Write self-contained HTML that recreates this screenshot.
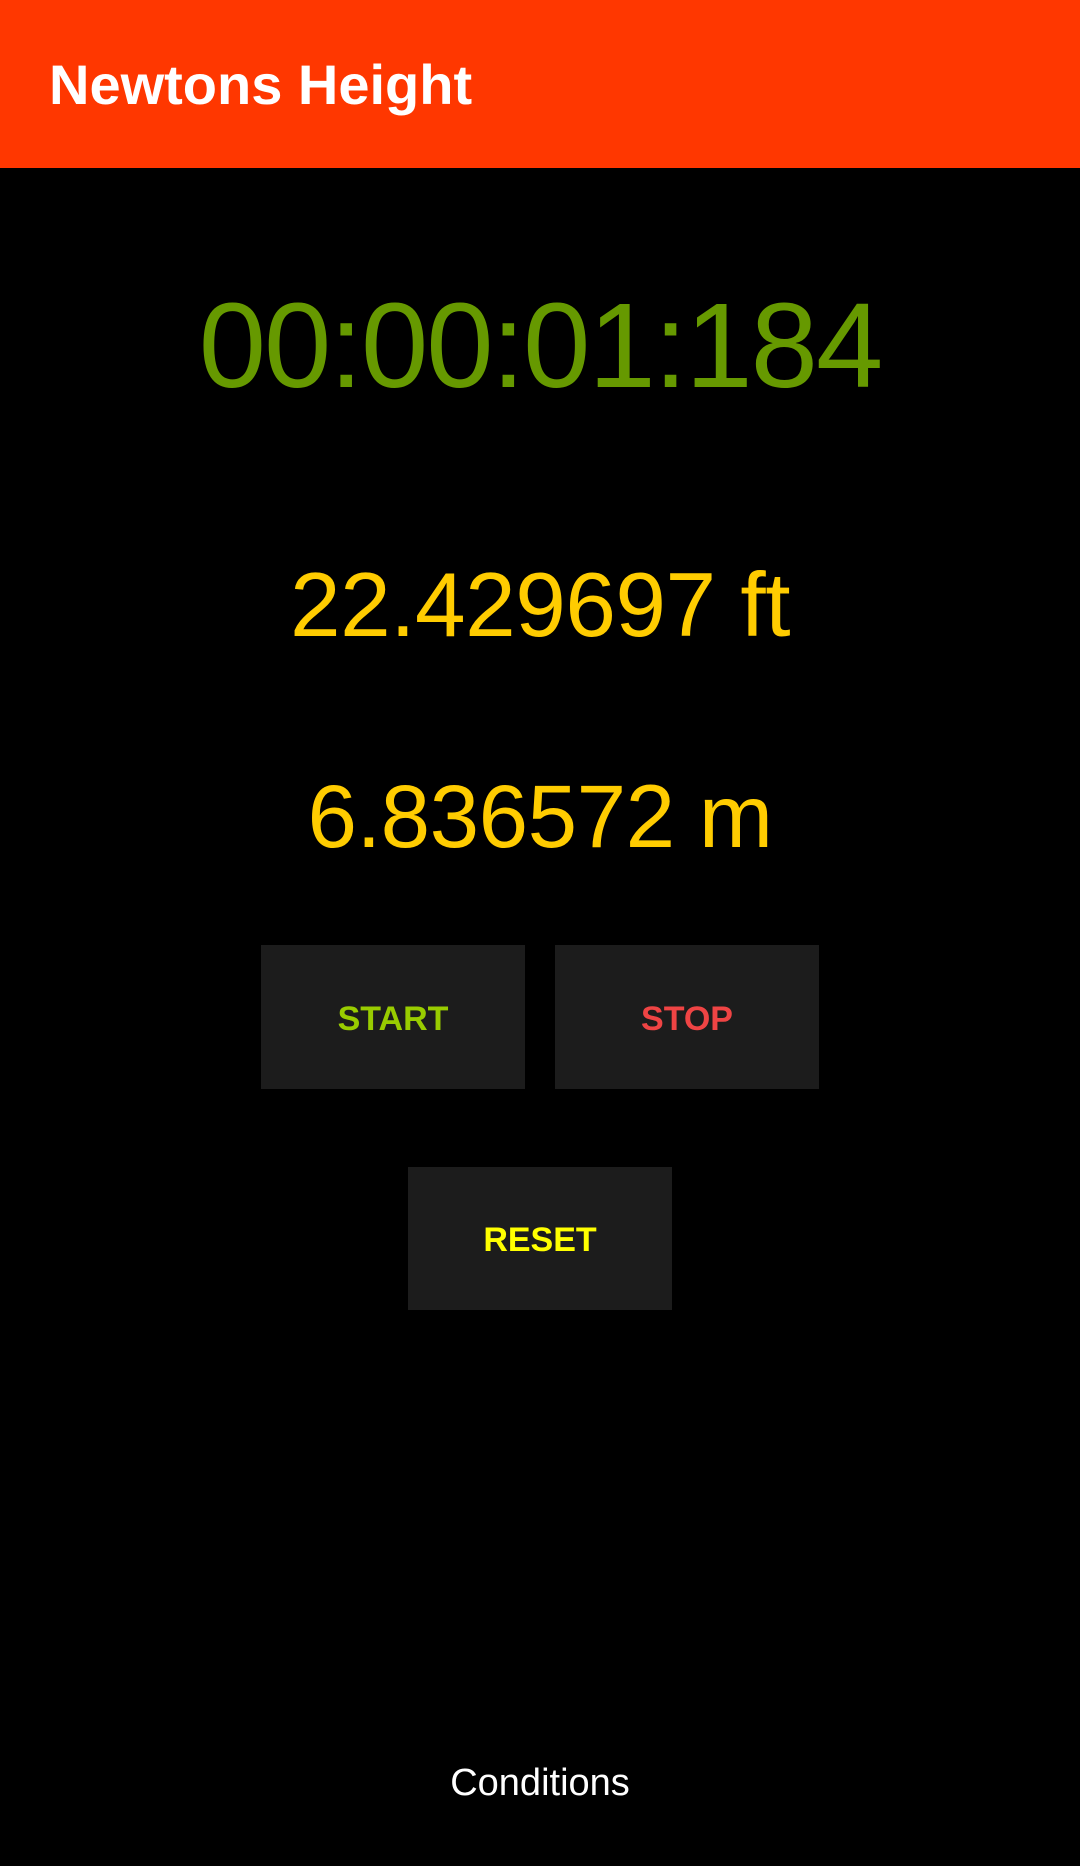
<!DOCTYPE html>
<html><head><meta charset="utf-8"><style>
html,body{margin:0;padding:0;background:#000;width:1080px;height:1866px;overflow:hidden;font-family:"Liberation Sans",sans-serif;}
.hdr{position:absolute;left:0;top:0;width:1080px;height:168px;background:#ff3700;}
.title{position:absolute;left:49px;top:57px;font-size:56px;font-weight:bold;color:#fff;line-height:1;letter-spacing:0px;}
.t{position:absolute;left:0;width:1080px;text-align:center;line-height:1;white-space:nowrap;}
.btn{position:absolute;background:#1c1c1c;display:flex;align-items:center;justify-content:center;font-weight:bold;font-size:34px;}
</style></head><body>
<div class="hdr"><div class="title">Newtons Height</div></div>
<div class="t" style="top:285px;font-size:121px;color:#669900;letter-spacing:-2px;">00:00:01:184</div>
<div class="t" style="top:560px;font-size:91px;color:#ffcc00;letter-spacing:-0.5px;">22.429697 ft</div>
<div class="t" style="top:772px;font-size:89px;color:#ffcc00;letter-spacing:-0.5px;">6.836572 m</div>
<div class="btn" style="left:261px;top:945px;width:264px;height:144px;color:#99cc00;"><span style="position:relative;top:2px">START</span></div>
<div class="btn" style="left:555px;top:945px;width:264px;height:144px;color:#ef4444;"><span style="position:relative;top:2px">STOP</span></div>
<div class="btn" style="left:408px;top:1167px;width:264px;height:143px;color:#ffff00;"><span style="position:relative;top:2px">RESET</span></div>
<div class="t" style="top:1764px;font-size:38px;color:#fff;">Conditions</div>
</body></html>
